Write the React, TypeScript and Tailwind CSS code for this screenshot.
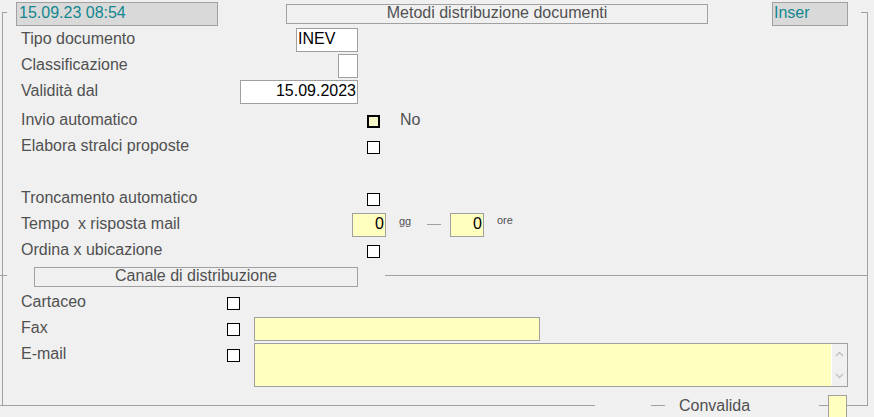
import React from "react";

const Check = ({ thick = false }: { thick?: boolean }) => (
  <div
    className={
      thick
        ? "mt-[9px] w-[13px] h-[13px] border-2 border-black bg-[#f6f6c8] shrink-0"
        : "mt-[9px] w-[13px] h-[13px] border border-black bg-white shrink-0"
    }
  />
);

const Label = ({ w, children }: { w: string; children?: React.ReactNode }) => (
  <div className={`${w} shrink-0 pt-[1px] leading-[26px] whitespace-nowrap`}>{children}</div>
);

export default function App() {
  return (
    <div className="w-[874px] h-[417px] bg-[#f0f0f0] overflow-hidden font-['Liberation_Sans',Arial,sans-serif] text-[16px] text-[#505050]">
      <div className="ml-[2px] mt-[12px] w-[866px] h-[394px] border-l border-r border-[#a0a0a0] flex flex-col">
        {/* header */}
        <div className="-mt-[10px] h-[23px] flex items-start">
          <div className="-ml-[1px] w-[5px] h-px mt-[10px] bg-[#a0a0a0] shrink-0" />
          <div className="ml-[9px] w-[202px] h-[24px] bg-[#d9d9d9] border border-[#a0a0a0] pl-[2px] leading-[19px] text-[#11878f] shrink-0">
            15.09.23 08:54
          </div>
          <div className="ml-[68px] mt-[2px] w-[422px] h-[20px] border border-[#a0a0a0] text-center leading-[16px] shrink-0">
            Metodi distribuzione documenti
          </div>
          <div className="ml-[64px] w-[76px] h-[24px] bg-[#d9d9d9] border border-[#a0a0a0] pl-[1px] leading-[19px] text-[#11878f] shrink-0">
            Inser
          </div>
          <div className="ml-[13px] flex-1 h-px mt-[10px] bg-[#a0a0a0]" />
        </div>

        <div className="pl-[18px] flex flex-col">
          {/* R1 */}
          <div className="h-[26px] flex items-start">
            <Label w="w-[275px]">Tipo documento</Label>
            <div className="mt-[3px] w-[62px] h-[24px] bg-white border border-[#a0a0a0] pl-[1px] leading-[19px] text-black">
              INEV
            </div>
          </div>
          {/* R2 */}
          <div className="h-[26px] flex items-start">
            <Label w="w-[317px]">Classificazione</Label>
            <div className="mt-[3px] w-[20px] h-[24px] bg-white border border-[#a0a0a0]" />
          </div>
          {/* R3 */}
          <div className="h-[26px] flex items-start">
            <Label w="w-[219px]">Validità dal</Label>
            <div className="mt-[3px] w-[118px] h-[24px] bg-white border border-[#a0a0a0] pr-[1px] text-right leading-[19px] text-black">
              15.09.2023
            </div>
          </div>
          {/* R4 */}
          <div className="mt-[3px] h-[26px] flex items-start">
            <Label w="w-[346px]">Invio automatico</Label>
            <Check thick />
            <div className="ml-[20px] pt-[1px] leading-[26px]">No</div>
          </div>
          {/* R5 */}
          <div className="h-[26px] flex items-start">
            <Label w="w-[346px]">Elabora stralci proposte</Label>
            <Check />
          </div>
          <div className="h-[26px]" />
          {/* R7 */}
          <div className="h-[26px] flex items-start">
            <Label w="w-[346px]">Troncamento automatico</Label>
            <Check />
          </div>
          {/* R8 */}
          <div className="h-[26px] flex items-start">
            <Label w="w-[331px]">Tempo&nbsp; x risposta mail</Label>
            <div className="mt-[3px] w-[34px] h-[24px] bg-[#ffffc0] border border-[#a0a0a0] pr-[1px] text-right leading-[19px] text-black shrink-0">
              0
            </div>
            <div className="ml-[13px] mt-[6px] w-[15px] text-[11px] leading-[11px] shrink-0">gg</div>
            <div className="ml-[13px] mt-[14px] w-[14px] h-px bg-[#a0a0a0] shrink-0" />
            <div className="ml-[9px] mt-[3px] w-[34px] h-[24px] bg-[#ffffc0] border border-[#a0a0a0] pr-[1px] text-right leading-[19px] text-black shrink-0">
              0
            </div>
            <div className="ml-[13px] mt-[5px] text-[11px] leading-[11px]">ore</div>
          </div>
          {/* R9 */}
          <div className="h-[26px] flex items-start">
            <Label w="w-[346px]">Ordina x ubicazione</Label>
            <Check />
          </div>
        </div>

        {/* separator */}
        <div className="mt-[5px] h-[20px] flex items-start">
          <div className="-ml-[3px] w-[7px] h-px mt-[8px] bg-[#a0a0a0] shrink-0" />
          <div className="ml-[27px] w-[324px] h-[20px] border border-[#a0a0a0] text-center leading-[16px] shrink-0">
            Canale di distribuzione
          </div>
          <div className="ml-[27px] flex-1 h-px mt-[8px] bg-[#a0a0a0]" />
        </div>

        <div className="pl-[18px] mt-[1px] flex flex-col">
          {/* R10 */}
          <div className="h-[26px] flex items-start">
            <Label w="w-[206px]">Cartaceo</Label>
            <Check />
          </div>
          {/* R11 */}
          <div className="h-[26px] flex items-start">
            <Label w="w-[206px]">Fax</Label>
            <Check />
            <div className="ml-[14px] mt-[3px] w-[286px] h-[24px] bg-[#ffffc0] border border-[#a0a0a0]" />
          </div>
          {/* R12 */}
          <div className="h-[47px] flex items-start">
            <Label w="w-[206px]">E-mail</Label>
            <Check />
            <div className="ml-[14px] mt-[3px] w-[594px] h-[44px] bg-[#ffffc0] border border-[#a0a0a0] flex">
              <div className="flex-1" />
              <div className="w-[16px] h-full bg-[#f0f0f0] border-l border-white flex flex-col items-center justify-between py-[7px]">
                <svg width="9" height="6" viewBox="0 0 9 6">
                  <path d="M1 5 L4.5 1.5 L8 5" fill="none" stroke="#c0c0c0" strokeWidth="1.3" />
                </svg>
                <svg width="9" height="6" viewBox="0 0 9 6">
                  <path d="M1 1 L4.5 4.5 L8 1" fill="none" stroke="#c0c0c0" strokeWidth="1.3" />
                </svg>
              </div>
            </div>
          </div>
        </div>

        {/* bottom */}
        <div className="mt-[8px] h-[22px] flex items-start">
          <div className="-ml-[3px] w-[595px] h-px mt-[10px] bg-[#a0a0a0] shrink-0" />
          <div className="ml-[56px] w-[14px] h-px mt-[10px] bg-[#a0a0a0] shrink-0" />
          <div className="ml-[14px] mt-[1px] w-[71px] leading-[19px] whitespace-nowrap shrink-0">Convalida</div>
          <div className="ml-[69px] w-[9px] h-px mt-[10px] bg-[#a0a0a0] shrink-0" />
          <div className="w-[19px] h-[30px] bg-[#ffffc0] border border-[#a0a0a0] shrink-0" />
          <div className="flex-1 h-px mt-[10px] bg-[#a0a0a0]" />
        </div>
      </div>
    </div>
  );
}
